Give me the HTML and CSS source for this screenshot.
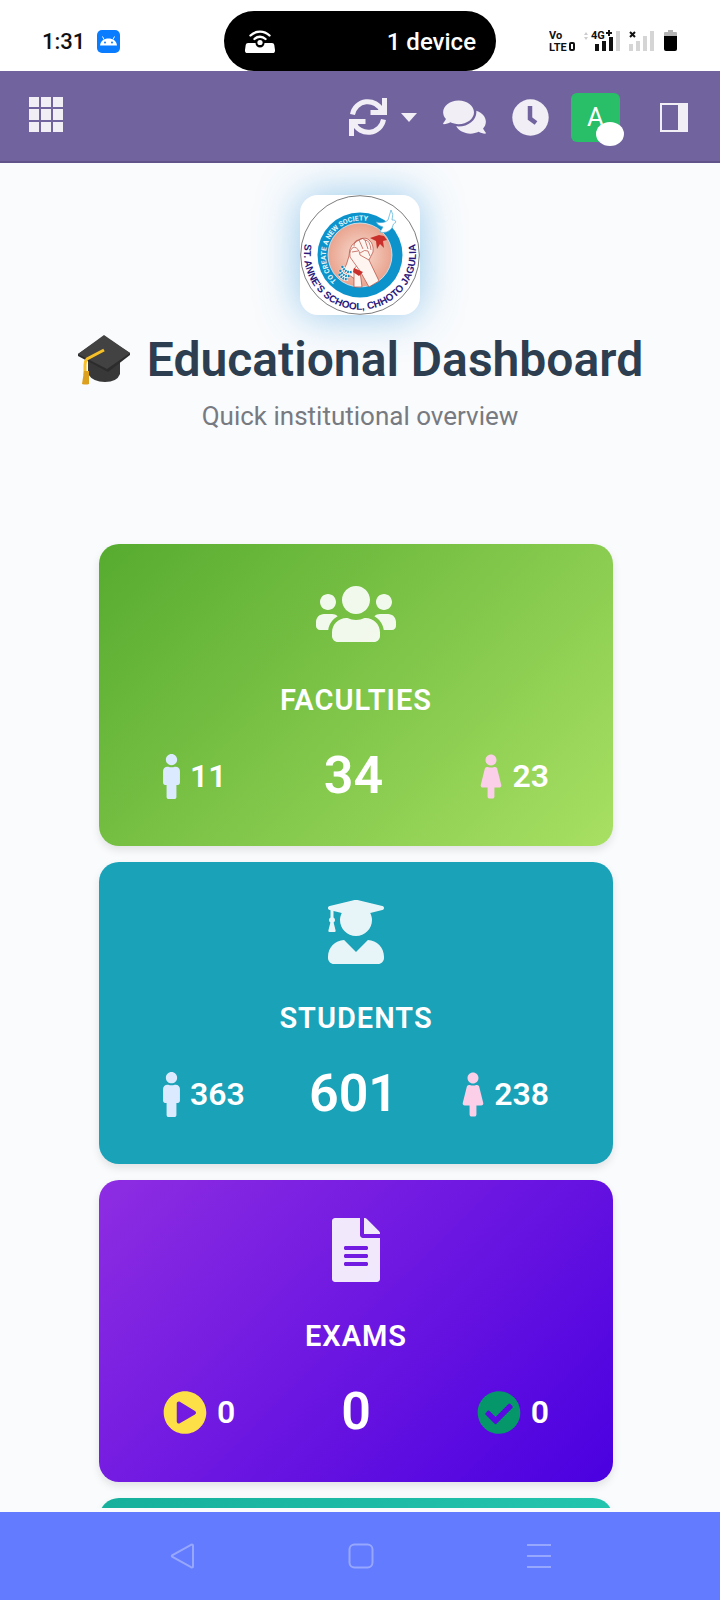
FILE: index.html
```html
<!DOCTYPE html>
<html lang="en">
<head>
<meta charset="utf-8">
<meta name="viewport" content="width=device-width, initial-scale=1">
<title>Educational Dashboard</title>
<link rel="stylesheet" href="styles.css">
</head>
<body>
<svg class="defs" aria-hidden="true">
  <symbol id="male" viewBox="0 0 192 512"><path d="M96 0c35.346 0 64 28.654 64 64s-28.654 64-64 64-64-28.654-64-64S60.654 0 96 0m48 144h-11.36c-22.711 10.443-49.59 10.894-73.28 0H48c-26.51 0-48 21.49-48 48v136c0 13.255 10.745 24 24 24h16v136c0 13.255 10.745 24 24 24h64c13.255 0 24-10.745 24-24V352h16c13.255 0 24-10.745 24-24V192c0-26.51-21.49-48-48-48z"/></symbol>
  <symbol id="female" viewBox="0 0 256 512"><path d="M128 0c35.346 0 64 28.654 64 64s-28.654 64-64 64c-35.346 0-64-28.654-64-64S92.654 0 128 0m119.283 354.179l-48-192A24 24 0 0 0 176 144h-11.36c-22.711 10.443-49.59 10.894-73.28 0H80a24 24 0 0 0-23.283 18.179l-48 192C4.935 369.305 16.383 384 32 384h56v104c0 13.255 10.745 24 24 24h32c13.255 0 24-10.745 24-24V384h56c15.591 0 27.071-14.671 23.283-29.821z"/></symbol>
</svg>

<div class="status">
  <div class="status-left">
    <span class="time">1:31</span>
    <svg class="android" viewBox="0 0 23 23" aria-hidden="true">
      <rect width="23" height="23" rx="5" fill="#0a7cff"/>
      <path d="M3 15.500C3.500 11 7 8.500 11.500 8.500s8 2.500 8.500 7z" fill="#fff"/>
      <path d="M7 9.500L5.500 6.500M16 9.500l1.500-3" stroke="#fff" stroke-width="1"/>
      <circle cx="8" cy="12.500" r="1" fill="#0a7cff"/><circle cx="15" cy="12.500" r="1" fill="#0a7cff"/>
    </svg>
  </div>
  <div class="island">
    <svg class="hotspot" viewBox="0 0 32 24" aria-hidden="true">
      <path d="M4 13h7.500a4.500 4.500 0 0 0 9 0H28q2 0 2.300 2l.7 5q.2 3-2.500 3h-25Q.8 23 1 20l.7-5Q2 13 4 13z" fill="#fff"/>
      <circle cx="16" cy="12.500" r="2.600" fill="#fff"/>
      <path d="M6.500 5.500a13.500 13.500 0 0 1 19 0M10.500 9a8 8 0 0 1 11 0" fill="none" stroke="#fff" stroke-width="2.400" stroke-linecap="round"/>
    </svg>
    <span>1 device</span>
  </div>
  <svg class="signals" viewBox="0 0 130 24" role="img" aria-label="VoLTE, 4G+, no second SIM, battery">
    <g class="tiny">
      <text x="0" y="10">Vo</text><text x="0" y="22">LTE</text><text x="42" y="10">4G</text>
    </g>
    <rect x="21" y="14" width="4" height="7" rx="1" fill="none" stroke="#111" stroke-width="2"/>
    <path d="M35 6l2-3 2 3zM35 8l2 3 2-3z" fill="#ccc"/>
    <path d="M57 4h6M60 1v6" stroke="#111" stroke-width="2"/>
    <path d="M46 15h4v7h-4zM53 12h4v10h-4zM60 8h4v14h-4z" fill="#111"/>
    <path d="M67 2h4v20h-4zM80 15h4v7h-4zM87 12h4v10h-4zM94 7h4v15h-4zM101 2h4v20h-4z" fill="#d5d5d5"/>
    <path d="M81 3l5 5M86 3l-5 5" stroke="#111" stroke-width="2"/>
    <path d="M115 7V4q0-1 1-1h3V1h5v2h3q1 0 1 1v3z" fill="#b3b3b3"/>
    <path d="M115 7h13v13q0 2-2 2h-9q-2 0-2-2z" fill="#000"/>
  </svg>
</div>

<header class="topbar">
  <button class="icon-btn apps" aria-label="Apps">
    <svg width="34" height="35" viewBox="0 0 34 35"><path d="M0 0h10v10H0zM12 0h10v10H12zM24 0h10v10H24zM0 12h10v11H0zM12 12h10v11H12zM24 12h10v11H24zM0 25h10v10H0zM12 25h10v10H12zM24 25h10v10H24z"/></svg>
  </button>
  <div class="tools">
    <button class="icon-btn refresh" aria-label="Refresh">
      <svg width="38" height="38" viewBox="0 0 38 38"><path d="M3.500 16.500A15.500 15.500 0 0 1 33 13M34.500 21.500A15.500 15.500 0 0 1 5 25" fill="none" stroke="#f1eef6" stroke-width="5"/><path d="M33 0h5v17H21.500v-5H29l4-3zM5 38H0V21h16.500v5H9l-4 3z"/></svg>
      <svg width="16" height="9" viewBox="0 0 16 9"><path d="M0 0h16L8 9z"/></svg>
    </button>
    <button class="icon-btn chat" aria-label="Messages">
      <svg width="43" height="38" viewBox="0 0 576 512"><path d="M416 192c0-88.400-93.100-160-208-160S0 103.600 0 192c0 34.300 14.100 65.900 38 92-13.400 30.200-35.500 54.200-35.800 54.500-2.200 2.300-2.800 5.700-1.500 8.700S4.800 352 8 352c36.600 0 66.900-12.300 88.700-25 32.200 15.700 70.300 25 111.300 25 114.900 0 208-71.600 208-160zm122 220c23.900-26 38-57.700 38-92 0-66.900-53.500-124.200-129.300-148.100.9 6.600 1.300 13.300 1.300 20.100 0 105.900-107.700 192-240 192-10.800 0-21.300-.8-31.700-1.900C207.800 439.600 281.800 480 368 480c41 0 79.100-9.200 111.300-25 21.800 12.700 52.100 25 88.700 25 3.200 0 6.100-1.900 7.300-4.800 1.300-2.900.7-6.300-1.500-8.700-.3-.3-22.400-24.200-35.800-54.500z"/></svg>
    </button>
    <button class="icon-btn" aria-label="Activities">
      <svg width="37" height="37" viewBox="0 0 37 37"><circle cx="18.500" cy="18.500" r="18.200"/><path d="M18 7v12.500l6 4.500" fill="none" stroke="#71639e" stroke-width="4.500"/></svg>
    </button>
    <button class="avatar" aria-label="Account">A<span class="presence"></span></button>
    <button class="icon-btn panel" aria-label="Toggle panel">
      <svg width="28" height="29" viewBox="0 0 28 29"><path d="M0 0h28v29H0zM2 2v25h16V2z" fill-rule="evenodd"/></svg>
    </button>
  </div>
</header>

<main class="page">
  <section class="hero">
    <svg class="logo" viewBox="0 0 120 120" role="img" aria-label="St. Anne's School, Chhoto Jagulia">
      <defs>
        <radialGradient id="skin"><stop offset="0" stop-color="#f9ddd2"/><stop offset="1" stop-color="#e9a48f"/></radialGradient>
        <path id="outer" d="M8 38A56 56 0 1 0 112 38"/>
        <path id="inner" d="M42 90A35 35 0 0 1 78 30"/>
      </defs>
      <circle cx="60" cy="60" r="59.300" fill="#fff" stroke="#444" stroke-width=".7"/>
      <circle cx="60" cy="60" r="42.500" fill="#0d93cb"/>
      <circle cx="60" cy="60" r="32" fill="url(#skin)" stroke="#d9eef6" stroke-width=".8"/>
      <g stroke="#b5483c" stroke-width=".7" fill="#fff5f0" stroke-linejoin="round">
        <path d="M43 76q4-6 6-15 0-7 3-11l8-6q6-2 9 1 5 4 4 12l-4 8-5 2-4 10-5 7z"/>
        <path d="M54 92V74l5-6 3 24z"/>
        <path d="M50 62q-1-8 4-10 5 1 6 8l9 5 10 21-10 6-9-16z"/>
        <path d="M54 51q0-6 5-6l4 9M59 45q4-3 6 0l3 9M65 45q5 0 6 10M60 58q5-4 8-2l2 5M52 57l6-1" fill="none"/>
      </g>
      <path d="M54 73l9 4-4 4-6-4zM70 43l9-3 5 1 3 4-4 1 1 7-4-4-3 5-1-8z" fill="#c92f2b"/>
      <path d="M42 71q3 7 10 6M40 75q3 7 10 6M39 79q4 6 9 5" fill="none" stroke="#fff" stroke-width="3.400"/>
      <path d="M42 71q3 7 10 6M40 75q3 7 10 6M39 79q4 6 9 5" fill="none" stroke="#1689bd" stroke-width="2.400" stroke-dasharray="1.800 .8"/>
      <path d="M76 27q8 2 12-2l3-10q3 4 1 10 3-1 4 2-3 1-4 6-5 6-12 4l3-5q-5-1-7-5z" fill="#fff" stroke="#4daed8" stroke-width=".7"/>
      <text class="ring-name"><textPath href="#outer" startOffset="50%" text-anchor="middle">ST. ANNE'S SCHOOL, CHHOTO JAGULIA</textPath></text>
      <text class="ring-motto"><textPath href="#inner" startOffset="48%" text-anchor="middle">TO CREATE A NEW SOCIETY</textPath></text>
    </svg>
    <h1>
      <svg class="cap" viewBox="0 0 54 50" aria-hidden="true">
        <path d="M11 24v15q5 8 17 8t15-8V22z" fill="#383838"/>
        <path d="M27 1L53 18v2L31 37 1 21v-2z" fill="#2c2c2c"/>
        <path d="M27 0L53 18 30 34 1 19z" fill="#424242"/>
        <path d="M27 15L10 24q-2 2-2 6v10" fill="none" stroke="#f6c026" stroke-width="3"/>
        <path d="M7 36h5v13q-3 1-7 0z" fill="#dda01e"/>
      </svg>
      Educational Dashboard
    </h1>
    <p>Quick institutional overview</p>
  </section>

  <section class="cards">
    <article class="card green">
      <svg class="glyph" viewBox="0 0 640 512" aria-hidden="true"><path d="M96 224c35.300 0 64-28.700 64-64s-28.700-64-64-64-64 28.700-64 64 28.700 64 64 64zm448 0c35.300 0 64-28.700 64-64s-28.700-64-64-64-64 28.700-64 64 28.700 64 64 64zm32 32h-64c-17.600 0-33.500 7.100-45.100 18.600 40.300 22.100 68.900 62 75.100 109.400h66c17.700 0 32-14.300 32-32v-32c0-35.300-28.700-64-64-64zm-256 0c61.900 0 112-50.100 112-112S381.900 32 320 32 208 82.100 208 144s50.100 112 112 112zm76.800 32h-8.300c-20.800 10-43.900 16-68.500 16s-47.600-6-68.500-16h-8.300C179.600 288 128 339.600 128 403.200V432c0 26.500 21.500 48 48 48h288c26.500 0 48-21.500 48-48v-28.800c0-63.600-51.600-115.200-115.200-115.200zm-223.700-13.400C161.500 263.100 145.600 256 128 256H64c-35.300 0-64 28.700-64 64v32c0 17.700 14.300 32 32 32h65.900c6.300-47.400 34.900-87.300 75.200-109.400z"/></svg>
      <h2>FACULTIES</h2>
      <div class="stats">
        <span class="stat boys"><svg width="17" height="45"><use href="#male"/></svg>11</span>
        <strong>34</strong>
        <span class="stat girls"><svg width="22" height="45"><use href="#female"/></svg>23</span>
      </div>
    </article>

    <article class="card teal">
      <svg class="glyph" viewBox="0 0 448 512" aria-hidden="true"><path d="M319.400 320.600L224 416l-95.400-95.400C57.100 323.700 0 382.200 0 454.400v9.600c0 26.500 21.500 48 48 48h352c26.500 0 48-21.500 48-48v-9.600c0-72.200-57.100-130.700-128.600-133.800zM13.600 79.800l6.400 1.500v58.400c-7 4.200-12 11.500-12 20.300 0 8.400 4.600 15.400 11.100 19.700L3.500 242c-1.700 6.900 2.100 14 7.600 14h41.800c5.500 0 9.300-7.100 7.600-14l-15.600-62.300C51.400 175.400 56 168.400 56 160c0-8.800-5-16.100-12-20.300V87.100l66 15.900c-8.600 17.200-14 36.400-14 57 0 70.700 57.300 128 128 128s128-57.300 128-128c0-20.600-5.300-39.800-14-57l96.300-23.200c18.200-4.400 18.200-27.100 0-31.500l-190.400-46c-13-3.100-26.700-3.100-39.700 0L13.600 48.200c-18.100 4.400-18.100 27.200 0 31.600z"/></svg>
      <h2>STUDENTS</h2>
      <div class="stats">
        <span class="stat boys"><svg width="17" height="45"><use href="#male"/></svg>363</span>
        <strong>601</strong>
        <span class="stat girls"><svg width="22" height="45"><use href="#female"/></svg>238</span>
      </div>
    </article>

    <article class="card violet">
      <svg class="glyph" viewBox="0 0 384 512" aria-hidden="true"><path d="M224 136V0H24C10.700 0 0 10.700 0 24v464c0 13.300 10.700 24 24 24h336c13.300 0 24-10.700 24-24V160H248c-13.200 0-24-10.800-24-24zm64 236c0 6.600-5.400 12-12 12H108c-6.600 0-12-5.400-12-12v-8c0-6.600 5.400-12 12-12h168c6.600 0 12 5.400 12 12v8zm0-64c0 6.600-5.400 12-12 12H108c-6.600 0-12-5.400-12-12v-8c0-6.600 5.400-12 12-12h168c6.600 0 12 5.400 12 12v8zm0-72v8c0 6.600-5.400 12-12 12H108c-6.600 0-12-5.400-12-12v-8c0-6.600 5.400-12 12-12h168c6.600 0 12 5.400 12 12zm96-114.100v6.100H256V0h6.100c6.400 0 12.500 2.500 17 7l97.900 98c4.500 4.500 7 10.600 7 16.900z"/></svg>
      <h2>EXAMS</h2>
      <div class="stats">
        <span class="stat running"><svg width="44" height="45" viewBox="0 0 512 512"><path d="M256 8C119 8 8 119 8 256s111 248 248 248 248-111 248-248S393 8 256 8zm115.700 272l-176 101c-15.800 8.800-35.700-2.500-35.700-21V152c0-18.400 19.800-29.800 35.700-21l176 107c16.400 9.200 16.400 32.900 0 42z"/></svg>0</span>
        <strong>0</strong>
        <span class="stat done"><svg width="44" height="45" viewBox="0 0 512 512"><path d="M504 256c0 136.967-111.033 248-248 248S8 392.967 8 256 119.033 8 256 8s248 111.033 248 248zM227.314 387.314l184-184c6.248-6.248 6.248-16.379 0-22.627l-22.627-22.627c-6.248-6.249-16.379-6.249-22.628 0L216 308.118l-70.059-70.059c-6.248-6.248-16.379-6.248-22.628 0l-22.627 22.627c-6.248 6.248-6.248 16.379 0 22.627l104 104c6.249 6.249 16.379 6.249 22.628.001z"/></svg>0</span>
      </div>
    </article>

    <article class="card mint"></article>
  </section>
</main>

<nav class="sysnav">
  <button aria-label="Back"><svg viewBox="0 0 26 26"><path d="M23 2.500v21q0 1.500-2 .7L2.500 14q-1.500-1 0-2L21 1.800q2-.8 2 .7z"/></svg></button>
  <button aria-label="Home"><svg viewBox="0 0 26 26"><rect x="1.500" y="1.500" width="23" height="23" rx="5"/></svg></button>
  <button aria-label="Recent apps"><svg viewBox="0 0 26 26"><path d="M1 2h24M1 13h24M1 24h24"/></svg></button>
</nav>
</body>
</html>
```
FILE: styles.css
```css
* { box-sizing: border-box; }

body {
  margin: 0;
  height: 100vh;
  display: flex;
  flex-direction: column;
  background: #f9fbfd;
  font-family: Roboto, "Liberation Sans", sans-serif;
}

button {
  border: 0;
  padding: 0;
  background: none;
  font: inherit;
  color: inherit;
}

svg { display: block; flex: none; }
.defs { position: absolute; width: 0; height: 0; }

/* Phone status bar */
.status {
  flex: none;
  display: grid;
  grid-template-columns: 1fr 272px 1fr;
  padding-top: 11px;
  background: #fff;
}
.status-left {
  display: flex;
  align-items: center;
  gap: 12px;
  padding-left: 42px;
}
.time { font-size: 22px; font-weight: 500; color: #111; }
.android { width: 23px; height: 23px; }
.island {
  height: 60px;
  display: flex;
  align-items: center;
  justify-content: space-between;
  padding: 2px 20px 0;
  border-radius: 30px;
  background: #000;
  color: #fff;
  font-size: 24px;
  font-weight: 500;
}
.hotspot { width: 32px; height: 24px; }
.signals { width: 130px; height: 24px; align-self: center; justify-self: end; margin-right: 41px; }
.tiny { font-size: 11px; font-weight: 700; fill: #111; }

/* App bar */
.topbar {
  flex: none;
  display: flex;
  align-items: center;
  justify-content: space-between;
  height: 92px;
  padding: 0 32px 0 29px;
  background: #71639e;
  border-bottom: 2px solid #5f5389;
}
.icon-btn { fill: #f1eef6; }
.apps { padding-bottom: 3px; }
.tools { display: flex; align-items: center; gap: 22px; padding-top: 2px; }
.refresh { display: flex; align-items: center; gap: 14px; }
.chat { margin: 0 4px; }
.avatar {
  position: relative;
  width: 49px;
  height: 49px;
  border-radius: 6px;
  background: #28bf68;
  color: #fff;
  font-size: 26px;
  font-weight: 400;
}
.presence {
  position: absolute;
  right: -4px;
  bottom: -4px;
  width: 28px;
  height: 24px;
  border-radius: 50%;
  background: #fff;
}
.panel { margin-left: 18px; }

/* Content */
.page { flex: 1; min-height: 0; overflow: hidden; border-bottom: 4px solid #f9fbfd; }
.hero {
  display: flex;
  flex-direction: column;
  align-items: center;
  padding-top: 32px;
}
.logo {
  width: 120px;
  height: 120px;
  border-radius: 18px;
  background: #fff;
  box-shadow: 0 0 40px rgba(52, 152, 219, .5);
}
.ring-name { font: bold 10px "Liberation Sans", sans-serif; fill: #2b1a7c; }
.ring-motto { font: bold 7px Roboto, sans-serif; fill: #e4f6fc; }
h1 {
  display: flex;
  align-items: center;
  gap: 16px;
  margin: 17px 0 0;
  font-size: 48px;
  line-height: 56px;
  font-weight: 600;
  color: #2c3e50;
  white-space: nowrap;
}
.cap { width: 54px; height: 50px; }
.hero p {
  margin: 12px 0 0;
  font-size: 26px;
  line-height: 32px;
  color: #777a80;
}

.cards {
  display: flex;
  flex-direction: column;
  gap: 16px;
  padding: 112px 107px 0 99px;
}
.card {
  display: flex;
  flex-direction: column;
  align-items: center;
  min-height: 302px;
  padding: 38px 64px 0;
  border-radius: 20px;
  box-shadow: 0 4px 8px rgba(0, 0, 0, .1);
  color: #fff;
}
.green { background: linear-gradient(135deg, #56ab2f, #a8e063); }
.teal { background: #19a2b8; }
.violet { background: linear-gradient(135deg, #8e2de2, #4a00e0); }
.mint { background: linear-gradient(135deg, #16b09c, #2bd0b8); }
.glyph { height: 64px; fill: #fff; opacity: .9; }
h2 {
  margin: 36px 0 0;
  font-size: 29px;
  line-height: 36px;
  font-weight: 600;
  letter-spacing: 1px;
}
.stats {
  align-self: stretch;
  display: flex;
  align-items: center;
  justify-content: space-between;
  margin-top: 28px;
  line-height: 60px;
}
.stats strong { font-size: 52px; font-weight: 600; }
.stat {
  display: flex;
  align-items: center;
  gap: 10px;
  font-size: 32px;
  font-weight: 600;
}
.boys { fill: #dbeafe; }
.girls { fill: #fbcfe8; }
.running { fill: #fddf47; }
.done { fill: #059669; }

/* System navigation */
.sysnav {
  flex: none;
  height: 88px;
  display: flex;
  align-items: center;
  justify-content: center;
  gap: 152px;
  padding-left: 2px;
  background: #637bfe;
}
.sysnav svg {
  width: 26px;
  height: 26px;
  fill: none;
  stroke: #98a7fe;
  stroke-width: 2;
}
```
